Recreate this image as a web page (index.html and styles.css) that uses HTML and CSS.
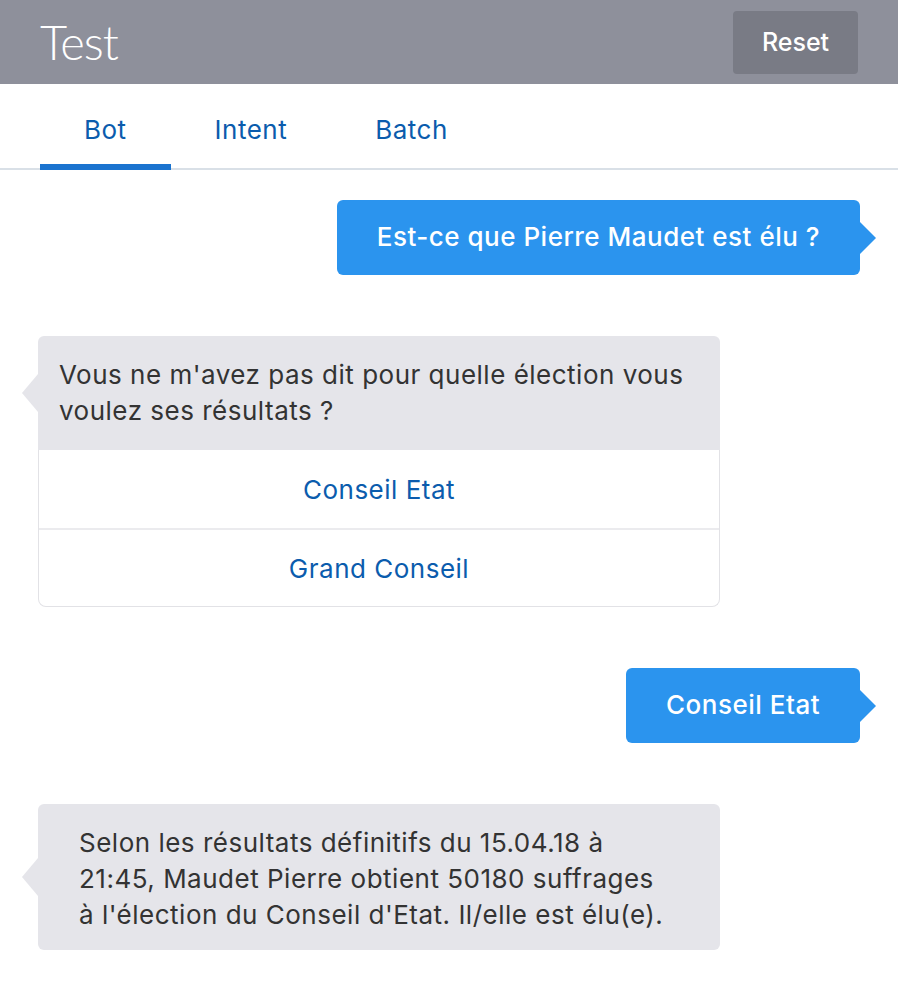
FILE: index.html
```html
<!DOCTYPE html>
<html lang="fr">
<head>
<meta charset="utf-8">
<title>Test</title>
<link rel="stylesheet" href="styles.css">
</head>
<body>
<header class="topbar">
  <h1 class="title">Test</h1>
  <button class="reset">Reset</button>
</header>
<nav class="tabs">
  <a class="tab active">Bot</a>
  <a class="tab">Intent</a>
  <a class="tab">Batch</a>
</nav>
<main class="chat">
  <div class="row right">
    <div class="bubble user">Est-ce que Pierre Maudet est élu ?</div>
  </div>
  <div class="row left">
    <div class="bot-card">
      <div class="bubble bot first">Vous ne m'avez pas dit pour quelle élection vous voulez ses résultats ?</div>
      <div class="choices">
        <div class="choice">Conseil Etat</div>
        <div class="choice">Grand Conseil</div>
      </div>
    </div>
  </div>
  <div class="row right">
    <div class="bubble user">Conseil Etat</div>
  </div>
  <div class="row left">
    <div class="bubble bot wide">Selon les résultats définitifs du 15.04.18 à 21:45, Maudet Pierre obtient 50180 suffrages à l'élection du Conseil d'Etat. Il/elle est élu(e).</div>
  </div>
</main>
</body>
</html>
```

FILE: styles.css
```css
* { box-sizing: border-box; }
body {
  margin: 0;
  font-family: Inter, "Liberation Sans", Helvetica, Arial, sans-serif;
  background: #fff;
  color: #333;
}
.topbar {
  height: 84px;
  background: #8e909b;
  display: flex;
  align-items: center;
  justify-content: space-between;
  padding: 0 40px;
}
.title {
  margin: 0;
  font-family: Lato, "Liberation Sans", sans-serif;
  font-weight: 300;
  font-size: 47px;
  letter-spacing: -1px;
  color: #fff;
  line-height: 1;
}
.reset {
  width: 125px;
  height: 63px;
  border: none;
  border-radius: 4px;
  background: #797b85;
  color: #fff;
  font-family: Inter, "Liberation Sans", Helvetica, Arial, sans-serif;
  font-weight: 500;
  font-size: 25px;
}
.tabs {
  display: flex;
  height: 86px;
  padding-left: 40px;
  border-bottom: 2px solid #d9e0e7;
  border-top-right-radius: 6px;
}
.tab {
  display: flex;
  align-items: center;
  padding: 11px 44px 0;
  font-size: 26px;
  letter-spacing: 0.5px;
  color: #0b5cad;
  margin-bottom: -2px;
  border-bottom: 6px solid transparent;
}
.tab.active {
  border-bottom-color: #1a73cf;
}
.chat {
  display: flex;
  flex-direction: column;
  gap: 61px;
  padding: 30px 38px 0;
}
.row { display: flex; }
.row.right { justify-content: flex-end; }
.row.left { justify-content: flex-start; }
.bubble {
  position: relative;
  font-size: 26px;
  letter-spacing: 0.5px;
  line-height: 36px;
  border-radius: 6px;
}
.bubble.user {
  background: #2b94ee;
  color: #fff;
  font-weight: 500;
  padding: 19px 40px 20px;
}
.bubble.user::after {
  content: "";
  position: absolute;
  right: -16px;
  top: 50%;
  margin-top: -16px;
  border-left: 16px solid #2b94ee;
  border-top: 16px solid transparent;
  border-bottom: 16px solid transparent;
}
.bubble.bot {
  background: #e5e5ea;
  color: #333;
}
.bubble.bot::before {
  content: "";
  position: absolute;
  left: -16px;
  top: 50%;
  margin-top: -19px;
  border-right: 16px solid #e5e5ea;
  border-top: 19px solid transparent;
  border-bottom: 19px solid transparent;
}
.bot-card { width: 682px; }
.bubble.bot.first {
  padding: 21px 21px;
  border-radius: 6px 6px 0 0;
}
.bubble.bot.wide {
  width: 682px;
  padding: 21px 50px 17px 41px;
}
.choices {
  border: 1px solid #e2e2e6;
  border-top: none;
  border-radius: 0 0 8px 8px;
}
.choice {
  height: 78px;
  display: flex;
  align-items: center;
  justify-content: center;
  font-size: 26px;
  letter-spacing: 0.5px;
  color: #0b5cad;
}
.choice + .choice {
  border-top: 2px solid #ebebee;
}
```
